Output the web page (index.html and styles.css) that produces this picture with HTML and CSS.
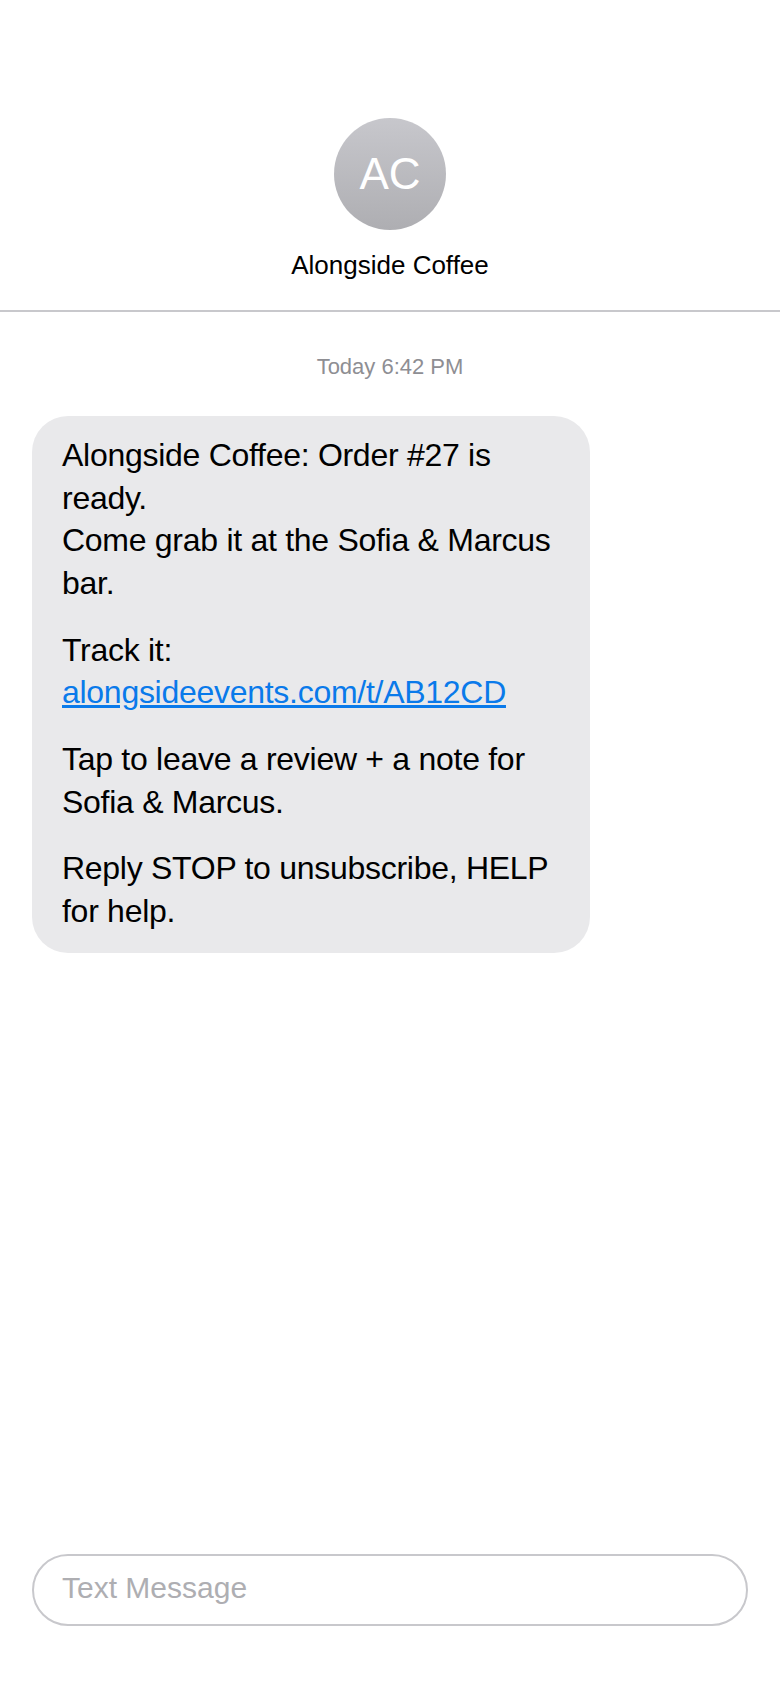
FILE: index.html
```html
<!DOCTYPE html>
<html lang="en">
<head>
    <meta charset="UTF-8">
    <meta name="viewport" content="width=device-width, initial-scale=1.0">
    <title>Alongside Coffee</title>
    <link rel="stylesheet" href="styles.css">
</head>
<body>
    <header class="contact">
        <div class="avatar">AC</div>
        <div class="contact-name">Alongside Coffee</div>
    </header>
    <main class="thread">
        <div class="timestamp">Today 6:42 PM</div>
        <div class="bubble">
            <p>Alongside Coffee: Order #27 is ready.<br>Come grab it at the Sofia &amp; Marcus bar.</p>
            <p>Track it:<br><a class="link" href="#">alongsideevents.com/t/AB12CD</a></p>
            <p>Tap to leave a review + a note for Sofia &amp; Marcus.</p>
            <p>Reply STOP to unsubscribe, HELP for help.</p>
        </div>
    </main>
    <footer class="composer">
        <div class="input-text">Text Message</div>
    </footer>
</body>
</html>
```

FILE: styles.css
```css
* {
    box-sizing: border-box;
}

body {
    margin: 0;
    height: 100vh;
    display: flex;
    flex-direction: column;
    font-family: "Liberation Sans", Arial, sans-serif;
    background-color: #fff;
    color: #000;
}

.contact {
    display: flex;
    flex-direction: column;
    align-items: center;
    gap: 20px;
    padding: 118px 0 30px;
    border-bottom: 2px solid #c8c8cc;
}

.avatar {
    width: 112px;
    height: 112px;
    border-radius: 50%;
    display: flex;
    justify-content: center;
    align-items: center;
    font-size: 44px;
    color: #fff;
    background: linear-gradient(#c7c7cc, #aeaeb2);
}

.contact-name {
    font-size: 26px;
    line-height: 30px;
}

.thread {
    flex: 1;
    padding: 42px 32px 0;
}

.timestamp {
    text-align: center;
    font-size: 22px;
    line-height: 26px;
    color: #8e8e93;
}

.bubble {
    width: 558px;
    margin-top: 36px;
    padding: 18px 30px 20px;
    border-radius: 36px;
    background-color: #e9e9eb;
    font-size: 32px;
    line-height: 42.67px;
    letter-spacing: -0.28px;
}

.bubble p {
    margin: 0 0 24px;
}

.bubble p:last-child {
    margin-bottom: 0;
}

.link {
    color: #0a7aea;
}

.composer {
    padding: 0 32px 64px;
}

.input-text {
    height: 72px;
    padding: 0 0 4px 28px;
    display: flex;
    align-items: center;
    border: 2px solid #c8c8cc;
    border-radius: 36px;
    font-size: 30px;
    color: #aeaeb2;
}
```
